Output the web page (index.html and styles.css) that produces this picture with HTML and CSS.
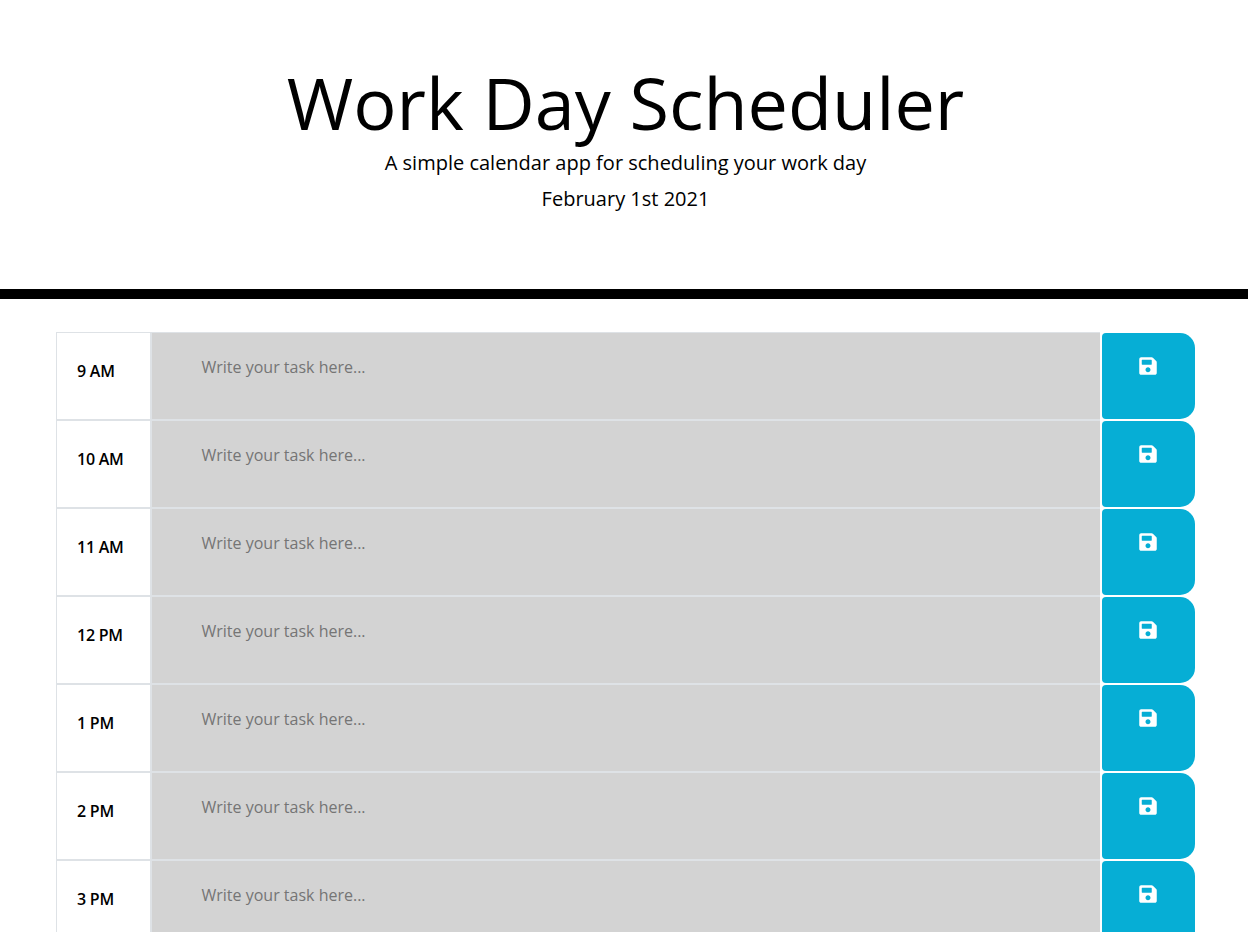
FILE: index.html
```html
<!DOCTYPE html>
<html lang="en">
<head>
    <meta charset="UTF-8">
    <title>Work Day Scheduler</title>
    <link rel="stylesheet" href="styles.css">
</head>
<body>
    <header class="jumbotron">
        <h1>Work Day Scheduler</h1>
        <p class="lead">A simple calendar app for scheduling your work day</p>
        <p class="lead">February 1st 2021</p>
    </header>

    <div class="container">
        <div class="time-block">
            <div class="hour">9 AM</div>
            <textarea class="description" placeholder="Write your task here..."></textarea>
            <button class="saveBtn"><svg viewBox="0 0 448 512" width="18" height="20"><path fill="currentColor" d="M433.9 129.9l-83.9-83.9A48 48 0 0 0 316.1 32H48C21.5 32 0 53.5 0 80v352c0 26.5 21.5 48 48 48h352c26.5 0 48-21.5 48-48V163.9a48 48 0 0 0-14.1-34zM224 416c-35.3 0-64-28.7-64-64 0-35.3 28.7-64 64-64s64 28.7 64 64c0 35.3-28.7 64-64 64zm96-304.5V212c0 6.6-5.4 12-12 12H76c-6.6 0-12-5.4-12-12V108c0-6.6 5.4-12 12-12h228.5c3.2 0 6.2 1.3 8.5 3.5l3.5 3.5c2.3 2.3 3.5 5.3 3.5 8.5z"/></svg></button>
        </div>
        <div class="time-block">
            <div class="hour">10 AM</div>
            <textarea class="description" placeholder="Write your task here..."></textarea>
            <button class="saveBtn"><svg viewBox="0 0 448 512" width="18" height="20"><path fill="currentColor" d="M433.9 129.9l-83.9-83.9A48 48 0 0 0 316.1 32H48C21.5 32 0 53.5 0 80v352c0 26.5 21.5 48 48 48h352c26.5 0 48-21.5 48-48V163.9a48 48 0 0 0-14.1-34zM224 416c-35.3 0-64-28.7-64-64 0-35.3 28.7-64 64-64s64 28.7 64 64c0 35.3-28.7 64-64 64zm96-304.5V212c0 6.6-5.4 12-12 12H76c-6.6 0-12-5.4-12-12V108c0-6.6 5.4-12 12-12h228.5c3.2 0 6.2 1.3 8.5 3.5l3.5 3.5c2.3 2.3 3.5 5.3 3.5 8.5z"/></svg></button>
        </div>
        <div class="time-block">
            <div class="hour">11 AM</div>
            <textarea class="description" placeholder="Write your task here..."></textarea>
            <button class="saveBtn"><svg viewBox="0 0 448 512" width="18" height="20"><path fill="currentColor" d="M433.9 129.9l-83.9-83.9A48 48 0 0 0 316.1 32H48C21.5 32 0 53.5 0 80v352c0 26.5 21.5 48 48 48h352c26.5 0 48-21.5 48-48V163.9a48 48 0 0 0-14.1-34zM224 416c-35.3 0-64-28.7-64-64 0-35.3 28.7-64 64-64s64 28.7 64 64c0 35.3-28.7 64-64 64zm96-304.5V212c0 6.6-5.4 12-12 12H76c-6.6 0-12-5.4-12-12V108c0-6.6 5.4-12 12-12h228.5c3.2 0 6.2 1.3 8.5 3.5l3.5 3.5c2.3 2.3 3.5 5.3 3.5 8.5z"/></svg></button>
        </div>
        <div class="time-block">
            <div class="hour">12 PM</div>
            <textarea class="description" placeholder="Write your task here..."></textarea>
            <button class="saveBtn"><svg viewBox="0 0 448 512" width="18" height="20"><path fill="currentColor" d="M433.9 129.9l-83.9-83.9A48 48 0 0 0 316.1 32H48C21.5 32 0 53.5 0 80v352c0 26.5 21.5 48 48 48h352c26.5 0 48-21.5 48-48V163.9a48 48 0 0 0-14.1-34zM224 416c-35.3 0-64-28.7-64-64 0-35.3 28.7-64 64-64s64 28.7 64 64c0 35.3-28.7 64-64 64zm96-304.5V212c0 6.6-5.4 12-12 12H76c-6.6 0-12-5.4-12-12V108c0-6.6 5.4-12 12-12h228.5c3.2 0 6.2 1.3 8.5 3.5l3.5 3.5c2.3 2.3 3.5 5.3 3.5 8.5z"/></svg></button>
        </div>
        <div class="time-block">
            <div class="hour">1 PM</div>
            <textarea class="description" placeholder="Write your task here..."></textarea>
            <button class="saveBtn"><svg viewBox="0 0 448 512" width="18" height="20"><path fill="currentColor" d="M433.9 129.9l-83.9-83.9A48 48 0 0 0 316.1 32H48C21.5 32 0 53.5 0 80v352c0 26.5 21.5 48 48 48h352c26.5 0 48-21.5 48-48V163.9a48 48 0 0 0-14.1-34zM224 416c-35.3 0-64-28.7-64-64 0-35.3 28.7-64 64-64s64 28.7 64 64c0 35.3-28.7 64-64 64zm96-304.5V212c0 6.6-5.4 12-12 12H76c-6.6 0-12-5.4-12-12V108c0-6.6 5.4-12 12-12h228.5c3.2 0 6.2 1.3 8.5 3.5l3.5 3.5c2.3 2.3 3.5 5.3 3.5 8.5z"/></svg></button>
        </div>
        <div class="time-block">
            <div class="hour">2 PM</div>
            <textarea class="description" placeholder="Write your task here..."></textarea>
            <button class="saveBtn"><svg viewBox="0 0 448 512" width="18" height="20"><path fill="currentColor" d="M433.9 129.9l-83.9-83.9A48 48 0 0 0 316.1 32H48C21.5 32 0 53.5 0 80v352c0 26.5 21.5 48 48 48h352c26.5 0 48-21.5 48-48V163.9a48 48 0 0 0-14.1-34zM224 416c-35.3 0-64-28.7-64-64 0-35.3 28.7-64 64-64s64 28.7 64 64c0 35.3-28.7 64-64 64zm96-304.5V212c0 6.6-5.4 12-12 12H76c-6.6 0-12-5.4-12-12V108c0-6.6 5.4-12 12-12h228.5c3.2 0 6.2 1.3 8.5 3.5l3.5 3.5c2.3 2.3 3.5 5.3 3.5 8.5z"/></svg></button>
        </div>
        <div class="time-block">
            <div class="hour">3 PM</div>
            <textarea class="description" placeholder="Write your task here..."></textarea>
            <button class="saveBtn"><svg viewBox="0 0 448 512" width="18" height="20"><path fill="currentColor" d="M433.9 129.9l-83.9-83.9A48 48 0 0 0 316.1 32H48C21.5 32 0 53.5 0 80v352c0 26.5 21.5 48 48 48h352c26.5 0 48-21.5 48-48V163.9a48 48 0 0 0-14.1-34zM224 416c-35.3 0-64-28.7-64-64 0-35.3 28.7-64 64-64s64 28.7 64 64c0 35.3-28.7 64-64 64zm96-304.5V212c0 6.6-5.4 12-12 12H76c-6.6 0-12-5.4-12-12V108c0-6.6 5.4-12 12-12h228.5c3.2 0 6.2 1.3 8.5 3.5l3.5 3.5c2.3 2.3 3.5 5.3 3.5 8.5z"/></svg></button>
        </div>
    </div>
</body>
</html>
```

FILE: styles.css
```css
* {
    box-sizing: border-box;
}

html, body {
    height: 100%;
    overflow: hidden;
}

body {
    margin: 0;
    background-color: #fff;
    color: #000;
    font-family: 'Open Sans', sans-serif;
    font-size: 16px;
    line-height: 1.5;
}

.jumbotron {
    height: 299px;
    padding: 63px 0 0 3px;
    text-align: center;
    border-bottom: 10px solid #000;
}

.jumbotron h1 {
    margin: 0 0 9px;
    font-size: 72px;
    font-weight: 400;
    line-height: 1.1;
}

.lead {
    margin: 0 0 12px;
    font-size: 20px;
    font-weight: 400;
    line-height: 24px;
}

.container {
    width: 1140px;
    margin: 33px 0 0 56px;
}

.time-block {
    display: flex;
    height: 88px;
}

.hour {
    width: 96px;
    padding: 26px 0 0 20px;
    font-size: 16px;
    font-weight: 600;
    letter-spacing: -0.25px;
    border: 1px solid #dee2e6;
    border-width: 1px 2px 1px 1px;
}

.description {
    flex: 1;
    padding: 22px 50px 22px 49.5px;
    background-color: #d3d3d3;
    border: 1px solid #dee2e6;
    border-width: 1px 0;
    font-family: inherit;
    font-size: 16px;
    line-height: 24px;
    resize: none;
}

.description::placeholder {
    color: #757575;
}

.saveBtn {
    width: 93px;
    margin: 1px 1px 1px 2px;
    padding: 0 1px 21px 0;
    background-color: #06aed5;
    color: #fff;
    border: none;
    border-radius: 4px 15px 15px 4px;
}

.saveBtn svg {
    display: block;
    margin: 0 auto;
}
```
